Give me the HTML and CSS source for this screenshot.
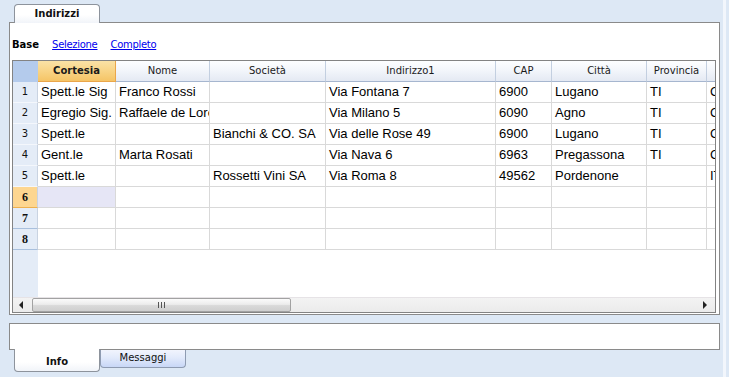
FILE: index.html
```html
<!DOCTYPE html>
<html>
<head>
<meta charset="utf-8">
<link rel="stylesheet" href="styles.css">
</head>
<body>
<div class="app">
  <div class="top-tabs">
    <div class="tab tab-top">Indirizzi</div>
  </div>
  <div class="panel">
    <div class="views">
      <span class="view-current">Base</span>
      <a class="view-link" href="#">Selezione</a>
      <a class="view-link" href="#">Completo</a>
    </div>
    <div class="grid">
      <div class="row head">
        <div class="c rh corner"></div>
        <div class="c w1 hsel">Cortesia</div>
        <div class="c w2">Nome</div>
        <div class="c w3">Società</div>
        <div class="c w4">Indirizzo1</div>
        <div class="c w5">CAP</div>
        <div class="c w6">Città</div>
        <div class="c w7">Provincia</div>
        <div class="c w8">Nazione</div>
      </div>
      <div class="row">
        <div class="c rh">1</div>
        <div class="c w1">Spett.le Sig</div>
        <div class="c w2">Franco Rossi</div>
        <div class="c w3"></div>
        <div class="c w4">Via Fontana 7</div>
        <div class="c w5">6900</div>
        <div class="c w6">Lugano</div>
        <div class="c w7">TI</div>
        <div class="c w8">CH</div>
      </div>
      <div class="row">
        <div class="c rh">2</div>
        <div class="c w1">Egregio Sig.</div>
        <div class="c w2">Raffaele de Lorenzi</div>
        <div class="c w3"></div>
        <div class="c w4">Via Milano 5</div>
        <div class="c w5">6090</div>
        <div class="c w6">Agno</div>
        <div class="c w7">TI</div>
        <div class="c w8">CH</div>
      </div>
      <div class="row">
        <div class="c rh">3</div>
        <div class="c w1">Spett.le</div>
        <div class="c w2"></div>
        <div class="c w3">Bianchi &amp; CO. SA</div>
        <div class="c w4">Via delle Rose 49</div>
        <div class="c w5">6900</div>
        <div class="c w6">Lugano</div>
        <div class="c w7">TI</div>
        <div class="c w8">CH</div>
      </div>
      <div class="row">
        <div class="c rh">4</div>
        <div class="c w1">Gent.le</div>
        <div class="c w2">Marta Rosati</div>
        <div class="c w3"></div>
        <div class="c w4">Via Nava 6</div>
        <div class="c w5">6963</div>
        <div class="c w6">Pregassona</div>
        <div class="c w7">TI</div>
        <div class="c w8">CH</div>
      </div>
      <div class="row">
        <div class="c rh">5</div>
        <div class="c w1">Spett.le</div>
        <div class="c w2"></div>
        <div class="c w3">Rossetti Vini SA</div>
        <div class="c w4">Via Roma 8</div>
        <div class="c w5">49562</div>
        <div class="c w6">Pordenone</div>
        <div class="c w7"></div>
        <div class="c w8">IT</div>
      </div>
      <div class="row">
        <div class="c rh rh-empty rh-sel">6</div>
        <div class="c w1 cell-sel"></div>
        <div class="c w2"></div>
        <div class="c w3"></div>
        <div class="c w4"></div>
        <div class="c w5"></div>
        <div class="c w6"></div>
        <div class="c w7"></div>
        <div class="c w8"></div>
      </div>
      <div class="row">
        <div class="c rh rh-empty">7</div>
        <div class="c w1"></div>
        <div class="c w2"></div>
        <div class="c w3"></div>
        <div class="c w4"></div>
        <div class="c w5"></div>
        <div class="c w6"></div>
        <div class="c w7"></div>
        <div class="c w8"></div>
      </div>
      <div class="row">
        <div class="c rh rh-empty">8</div>
        <div class="c w1"></div>
        <div class="c w2"></div>
        <div class="c w3"></div>
        <div class="c w4"></div>
        <div class="c w5"></div>
        <div class="c w6"></div>
        <div class="c w7"></div>
        <div class="c w8"></div>
      </div>
      <div class="filler"></div>
      <div class="hscroll">
        <div class="sb-btn"><span class="arrow-left"></span></div>
        <div class="sb-thumb"><span class="grip"></span></div>
        <div class="sb-track"></div>
        <div class="sb-btn sb-btn-right"><span class="arrow-right"></span></div>
      </div>
    </div>
  </div>
  <div class="panel-info"></div>
  <div class="bottom-tabs">
    <div class="tab tab-info">Info</div>
    <div class="tab tab-msg">Messaggi</div>
  </div>
</div>
</body>
</html>
```

FILE: styles.css
```css
html, body {
  margin: 0;
  padding: 0;
  background: #dde8f5;
}

.app {
  width: 714px;
  height: 377px;
  padding-left: 9px;
  border-right: 3px solid #f2f6fc;
  background: #dde8f5;
  display: flex;
  flex-direction: column;
  overflow: hidden;
  font-family: "DejaVu Sans", sans-serif;
  font-size: 10px;
  color: #000;
}

/* top tab */
.top-tabs {
  display: flex;
  padding: 4px 0 0 5px;
  height: 18px;
  position: relative;
  z-index: 2;
}

.tab {
  box-sizing: border-box;
  width: 86px;
  text-align: center;
}

.tab-top {
  height: 19px;
  border: 1px solid #8d939c;
  border-bottom: none;
  border-radius: 4px 4px 0 0;
  background: linear-gradient(#ffffff 0%, #ffffff 55%, #f1f4f9 100%);
  font-weight: bold;
  line-height: 16px;
  padding-top: 1px;
  color: #111;
}

/* main panel */
.panel {
  box-sizing: border-box;
  width: 711px;
  height: 293px;
  border: 1px solid #8a8a8a;
  background: #fff;
  display: flex;
  flex-direction: column;
}

.views {
  box-sizing: border-box;
  height: 37px;
  padding: 15px 0 0 2px;
  line-height: 13px;
  display: flex;
  gap: 13px;
}

.view-current {
  font-weight: bold;
  color: #000;
}

.view-link {
  color: #0000ee;
  text-decoration: underline;
  letter-spacing: -0.3px;
}

/* grid */
.grid {
  box-sizing: border-box;
  margin-left: 2px;
  width: 704px;
  height: 253px;
  border: 1px solid #838383;
  display: flex;
  flex-direction: column;
  overflow: hidden;
  background: linear-gradient(to right, #e4ecf7 0, #e4ecf7 25px, #fff 25px);
}

.row {
  display: flex;
  height: 21px;
  flex: none;
  background: #fff;
}

.c {
  box-sizing: border-box;
  flex: none;
  height: 21px;
  border-right: 1px solid #d9d9d9;
  border-bottom: 1px solid #d9d9d9;
  padding-left: 3px;
  white-space: nowrap;
  overflow: hidden;
  font-family: "Liberation Sans", Arial, sans-serif;
  font-size: 13px;
  line-height: 20px;
  color: #000;
}

.w1 { width: 78px; }
.w2 { width: 94px; }
.w3 { width: 116px; }
.w4 { width: 170px; }
.w5 { width: 56px; }
.w6 { width: 95px; }
.w7 { width: 60px; }
.w8 { width: 100px; }

.rh {
  width: 25px;
  padding: 0;
  text-align: center;
  background: #e4ecf7;
  border-right: 1px solid #c9d3e1;
  border-bottom: 1px solid #f4f7fc;
  font-family: "DejaVu Sans", sans-serif;
  font-size: 10px;
  color: #111;
}

.rh-empty {
  font-family: "Liberation Serif", serif;
  font-weight: bold;
  font-size: 12px;
  border-bottom-color: #a9c0dd;
}

.rh-sel {
  background: #fdd690;
  border-bottom-color: #eeb04e;
}

.cell-sel {
  background: #e6e6f6;
}

.head .c {
  padding: 0;
  text-align: center;
  font-family: "DejaVu Sans", sans-serif;
  font-size: 10px;
  color: #1a1a1a;
  background: linear-gradient(#fdfeff 0%, #f3f6fb 45%, #e4e9f3 100%);
  border-right-color: #c3cfe0;
  border-bottom-color: #a6b6cf;
}

.head .corner {
  background: #b4cbec;
  border-right-color: #b4cbec;
  border-bottom-color: #b4cbec;
}

.head .hsel {
  font-weight: bold;
  background: linear-gradient(#fae2a6 0%, #f8d486 50%, #f5c466 100%);
  border-right-color: #eaa64a;
  border-bottom-color: #eaa64a;
}

.filler {
  flex: 1;
}

/* horizontal scrollbar */
.hscroll {
  height: 15px;
  flex: none;
  display: flex;
  background: linear-gradient(#f3f3f3, #ebebeb);
  border-top: 1px solid #e6e3e6;
  box-sizing: border-box;
}

.sb-btn {
  width: 19px;
  flex: none;
  display: flex;
  align-items: center;
  justify-content: center;
}

.sb-btn-right {
  width: 18px;
}

.arrow-left {
  width: 0;
  height: 0;
  margin-left: -4px;
  border-top: 4px solid transparent;
  border-bottom: 4px solid transparent;
  border-right: 4px solid #222;
}

.arrow-right {
  width: 0;
  height: 0;
  margin-left: -2px;
  border-top: 4px solid transparent;
  border-bottom: 4px solid transparent;
  border-left: 4px solid #222;
}

.sb-thumb {
  box-sizing: border-box;
  width: 259px;
  flex: none;
  height: 14px;
  border: 1px solid #a2a2a2;
  border-radius: 2px;
  background: linear-gradient(#fbfbfb 0%, #ececec 45%, #d9d9d9 55%, #cfcfcf 100%);
  display: flex;
  align-items: center;
  justify-content: center;
}

.grip {
  width: 7px;
  height: 6px;
  background: repeating-linear-gradient(to right, #555 0, #555 1px, transparent 1px, transparent 3px);
}

.sb-track {
  flex: 1;
}

/* info panel */
.panel-info {
  box-sizing: border-box;
  margin-top: 8px;
  width: 711px;
  height: 27px;
  flex: none;
  border: 1px solid #8a8a8a;
  background: #fff;
}

.bottom-tabs {
  display: flex;
  padding-left: 5px;
  position: relative;
  z-index: 2;
}

.tab-info {
  margin-top: -1px;
  height: 23px;
  border: 1px solid #8d939c;
  border-top: none;
  border-radius: 0 0 4px 4px;
  background: linear-gradient(#ffffff 0%, #ffffff 60%, #f1f4f9 100%);
  font-weight: bold;
  line-height: 13px;
  padding-top: 6px;
  color: #111;
}

.tab-msg {
  height: 18px;
  border: 1px solid #8e9bb1;
  border-top: none;
  border-radius: 0 0 4px 4px;
  background: linear-gradient(#f1f4fd 0%, #e2eafb 45%, #c8d7f6 100%);
  line-height: 13px;
  padding-top: 1px;
  color: #111;
}
```
